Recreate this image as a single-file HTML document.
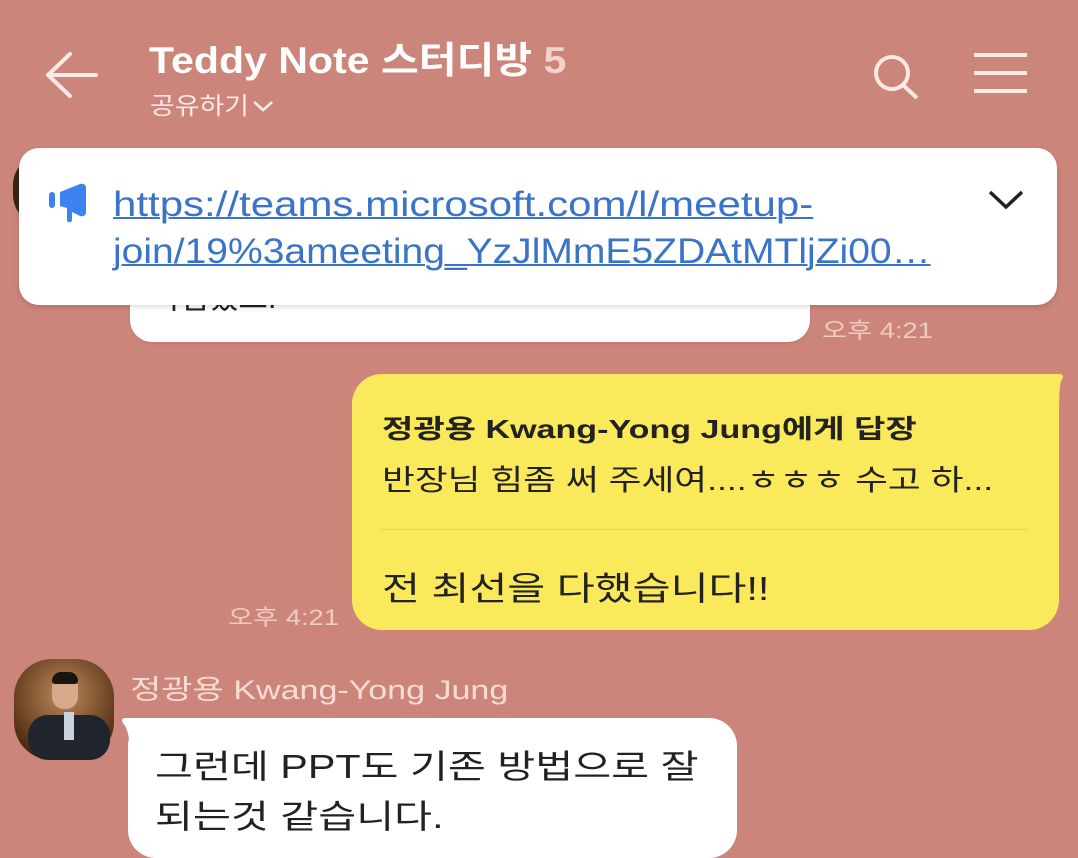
<!DOCTYPE html>
<html><head><meta charset="utf-8"><style>
*{margin:0;padding:0;box-sizing:border-box}
body{width:1078px;height:837px;overflow:hidden;background:#cc857a;font-family:"Liberation Sans","Noto Sans CJK KR",sans-serif;position:relative}
.a{position:absolute;white-space:nowrap;transform-origin:left top}
</style></head><body>
<svg class="a" style="left:40px;top:48px" width="64" height="54"><path d="M8 27H56M8 27L30 6M8 27L30 48" stroke="#fbe9e5" stroke-width="4" fill="none" stroke-linecap="round"/></svg>
<div class="a" style="left:149px;top:30px;font-size:37px;font-weight:bold;color:#fff;transform:scaleX(1.11)">Teddy Note 스터디방 <span style="color:#f3d3cc">5</span></div>
<div class="a" style="left:150px;top:86px;font-size:24px;color:#fbe9e5;transform:scaleX(1.12)">공유하기<svg width="22" height="16" style="margin-left:2px"><path d="M3 4L11 12L19 4" stroke="#fbe9e5" stroke-width="2.5" fill="none"/></svg></div>
<svg class="a" style="left:868px;top:50px" width="56" height="52"><circle cx="24" cy="23" r="16" stroke="#fbe9e5" stroke-width="4" fill="none"/><path d="M35 35L49 48" stroke="#fbe9e5" stroke-width="4"/></svg>
<div class="a" style="left:974px;top:53px;width:53px;height:4px;background:#fbe9e5"></div>
<div class="a" style="left:974px;top:71px;width:53px;height:4px;background:#fbe9e5"></div>
<div class="a" style="left:974px;top:89px;width:53px;height:4px;background:#fbe9e5"></div>
<div class="a" style="left:13px;top:155px;width:100px;height:70px;border-radius:30px;background:#3a2418"></div>
<div class="a" style="left:130px;top:270px;width:680px;height:72px;border-radius:22px;background:#fff;box-shadow:0 2px 3px rgba(0,0,0,.08)"></div>
<div class="a" style="left:150px;top:272px;font-size:32px;color:#222">이렵겠죠.</div>
<div class="a" style="left:822px;top:313px;font-size:22px;color:#f0cbc3;transform:scaleX(1.24)">오후 4:21</div>
<div class="a" style="left:19px;top:148px;width:1038px;height:157px;border-radius:20px;background:#fff;box-shadow:0 2px 6px rgba(0,0,0,.15)"></div>
<svg class="a" style="left:48px;top:182px" width="42" height="42"><rect x="1" y="10" width="6" height="16" rx="3" fill="#3c82f0"/><path d="M12 10L32 2C36 1 38 3 38 6V30C38 33 36 35 32 34L24 30V38C24 41 19 41 19 38V26L12 24Z" fill="#3c82f0"/></svg>
<div class="a" style="left:113px;top:181px;font-size:35px;line-height:47px;color:#3a74c8;text-decoration:underline;text-decoration-thickness:2px;transform:scaleX(1.2)">https://teams.microsoft.com/l/meetup-</div>
<div class="a" style="left:113px;top:228px;font-size:35px;line-height:47px;color:#3a74c8;text-decoration:underline;text-decoration-thickness:2px;transform:scaleX(1.115)">join/19%3ameeting_YzJlMmE5ZDAtMTljZi00…</div>
<svg class="a" style="left:986px;top:186px" width="42" height="30"><path d="M4 6L20 21L36 6" stroke="#222" stroke-width="3.5" fill="none"/></svg>
<div class="a" style="left:352px;top:374px;width:707px;height:256px;border-radius:30px;background:#fbe95c"></div>
<svg class="a" style="left:1020px;top:374px" width="50" height="50"><path d="M0 0L38 0C43 0 44 2 42 5C40 9 39 14 39 50L0 50Z" fill="#fbe95c"/></svg>
<div class="a" style="left:382px;top:409px;font-size:26px;font-weight:bold;color:#222;transform:scaleX(1.31)">정광용 Kwang-Yong Jung에게 답장</div>
<div class="a" style="left:382px;top:457px;font-size:29px;color:#222;transform:scaleX(1.23)">반장님 힘좀 써 주세여....ㅎㅎㅎ 수고 하...</div>
<div class="a" style="left:381px;top:529px;width:646px;height:1px;background:#e8d54e"></div>
<div class="a" style="left:382px;top:562px;font-size:33px;color:#222;transform:scaleX(1.25)">전 최선을 다했습니다!!</div>
<div class="a" style="left:228px;top:600px;font-size:22px;color:#f0cbc3;transform:scaleX(1.24)">오후 4:21</div>
<div class="a" style="left:14px;top:659px;width:100px;height:101px;border-radius:38px;background:radial-gradient(circle at 50% 35%,#c08a5a,#5a3418 70%,#2a1608)"></div>
<div class="a" style="left:52px;top:675px;width:26px;height:34px;border-radius:12px;background:#d8a88a"></div>
<div class="a" style="left:52px;top:672px;width:26px;height:12px;border-radius:12px 12px 4px 4px;background:#1a1412"></div>
<div class="a" style="left:28px;top:715px;width:82px;height:45px;border-radius:20px;background:#20242c"></div>
<div class="a" style="left:64px;top:712px;width:10px;height:28px;background:#c9d3e0"></div>
<div class="a" style="left:130px;top:668px;font-size:27px;color:#f7dcd6;transform:scaleX(1.26)">정광용 Kwang-Yong Jung</div>
<div class="a" style="left:128px;top:718px;width:609px;height:140px;border-radius:28px;background:#fff"></div>
<svg class="a" style="left:120px;top:718px" width="40" height="40"><path d="M40 0L6 0C2 0 1 2 3 5C6 9 10 14 10 40L40 40Z" fill="#fff"/></svg>
<div class="a" style="left:155px;top:742px;font-size:33px;line-height:50px;color:#222;transform:scaleX(1.25)">그런데 PPT도 기존 방법으로 잘<br>되는것 같습니다.</div>
</body></html>
